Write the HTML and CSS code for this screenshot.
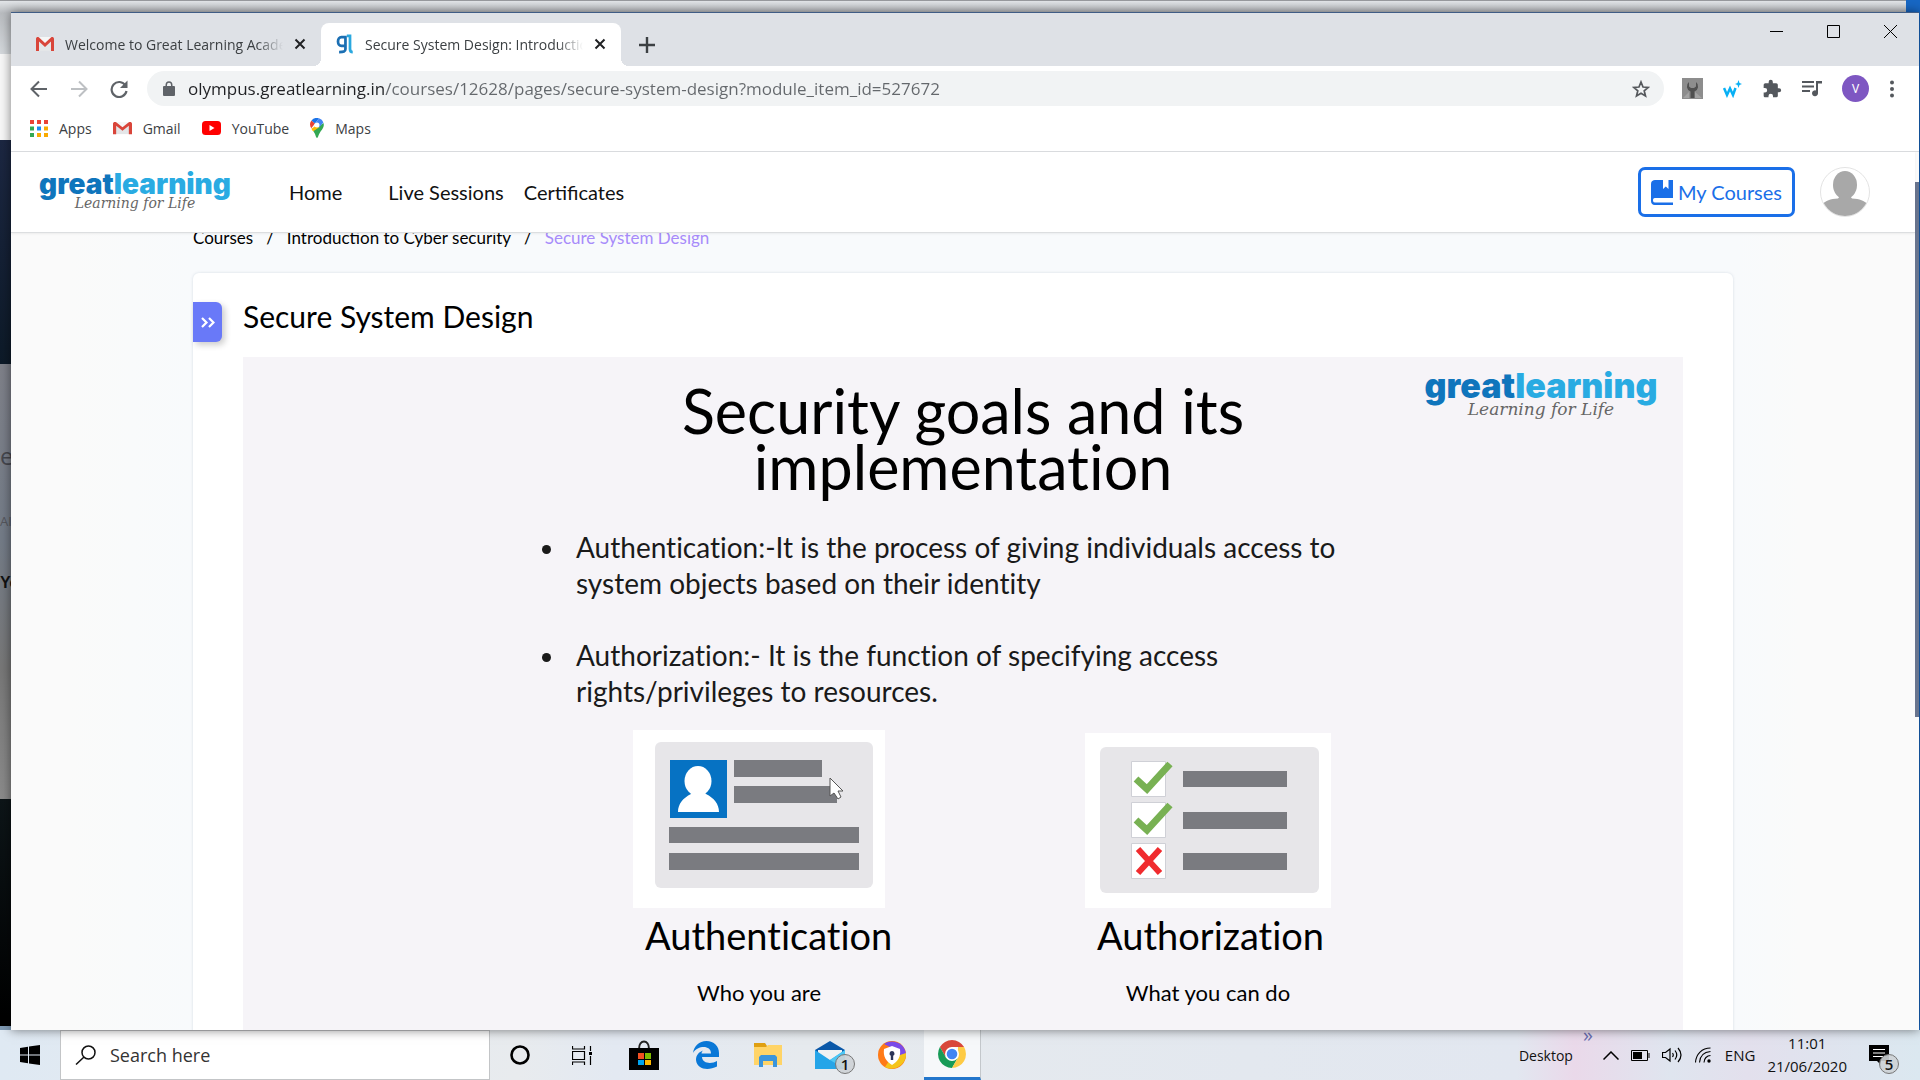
FILE: index.html
```html
<!DOCTYPE html>
<html lang="en">
<head>
<meta charset="utf-8">
<title>Secure System Design</title>
<link rel="stylesheet" href="styles.css">
</head>
<body>
<svg class="defs" aria-hidden="true">
  <symbol id="gmail" viewBox="0 0 18 16"><path fill="#e4e6e8" d="M2 2h14v13H2z"/><path fill="#f6f6f6" d="M3 1h12L9 8z"/><path fill="#d9453a" d="M0 15V3c0-2 2-2.500 3-1.500L9 7l6-5.500c1-1 3-.5 3 1.500v12h-3V5.500L9 11 3 5.500V15z"/></symbol>
  <symbol id="close" viewBox="0 0 12 12"><path d="M1.500 1.500l9 9M10.500 1.500l-9 9" stroke="#202124" stroke-width="2"/></symbol>
</svg>
<div class="desktop">
  <div class="backdrop" aria-hidden="true">
    <div class="back-tabs"></div>
    <div class="back-bar"></div>
    <div class="back-hero"></div>
    <div class="back-body"><span class="back-e">e</span><span class="back-ai">AI</span><span class="back-yo">Yo</span></div>
    <div class="back-foot"></div>
  </div>
  <div class="window">
    <div class="tabstrip">
      <div class="tab">
        <svg class="fav" viewBox="0 0 18 16"><use href="#gmail"/></svg>
        <span class="tab-title">Welcome to Great Learning Academy</span>
        <button class="bare" aria-label="Close tab"><svg width="12" height="12"><use href="#close"/></svg></button>
      </div>
      <div class="tab active">
        <svg class="fav" viewBox="0 0 18 22"><g fill="none" stroke-width="3"><path stroke="#1b6fb3" d="M9.500 3.500H5a3.500 4.500 0 0 0 0 9.500h4.500M9.500 2v14.500c0 3-2 3.500-7 3.500"/><path stroke="#2aa8df" d="M11 2h3.500v14.500c0 2 1 3.500 3 3.500"/></g></svg>
        <span class="tab-title">Secure System Design: Introduction</span>
        <button class="bare" aria-label="Close tab"><svg width="12" height="12"><use href="#close"/></svg></button>
      </div>
      <button class="bare newtab" aria-label="New tab"><svg width="16" height="16" viewBox="0 0 16 16"><path d="M8 0v16M0 8h16" stroke="#3c4043" stroke-width="2.400"/></svg></button>
      <div class="controls">
        <button class="bare" aria-label="Minimize"><svg width="13" height="13"><path d="M0 6.500h13" stroke="#000"/></svg></button>
        <button class="bare" aria-label="Maximize"><svg width="13" height="13"><path d="M.5.5h12v12H.5z" fill="none" stroke="#000"/></svg></button>
        <button class="bare" aria-label="Close"><svg width="13" height="13"><path d="M0 0l13 13M13 0L0 13" stroke="#000"/></svg></button>
      </div>
    </div>
    <div class="toolbar">
      <button class="bare" aria-label="Back"><svg width="18" height="18" viewBox="0 0 18 18"><path d="M17 9H2M9 1.500L1.500 9 9 16.500" fill="none" stroke="#5f6368" stroke-width="2"/></svg></button>
      <button class="bare" aria-label="Forward"><svg width="18" height="18" viewBox="0 0 18 18"><path d="M1 9h15M9 1.500L16.500 9 9 16.500" fill="none" stroke="#bdc0c3" stroke-width="2"/></svg></button>
      <button class="bare" aria-label="Reload"><svg width="18" height="18" viewBox="0 0 18 18"><path d="M15.500 5.500A7.500 7.500 0 1 0 16.500 11" fill="none" stroke="#5f6368" stroke-width="2.200"/><path d="M17.500.5v7.500H10z" fill="#5f6368"/></svg></button>
      <div class="omnibox">
        <svg width="12" height="15" viewBox="0 0 12 15"><path fill="#5f6368" d="M1 5h1.500V4a3.500 3.800 0 0 1 7 0v1H11a1 1 0 0 1 1 1v8a1 1 0 0 1-1 1H1a1 1 0 0 1-1-1V6a1 1 0 0 1 1-1zm3 0h4V4a2 2.300 0 0 0-4 0z"/></svg>
        <input class="url" aria-label="Address" value="olympus.greatlearning.in/courses/12628/pages/secure-system-design?module_item_id=527672">
        <button class="bare" aria-label="Bookmark"><svg width="18" height="18" viewBox="0 0 18 18"><path d="M9 2l2 5 5.200.4-4 3.400 1.300 5.200L9 13.200 4.500 16l1.300-5.200-4-3.400L7 7z" fill="none" stroke="#55585c" stroke-width="1.700"/></svg></button>
      </div>
      <div class="extensions">
        <button class="bare" aria-label="Wrench extension"><svg width="21" height="21" viewBox="0 0 21 21"><path fill="#8d8d8d" d="M0 0h21v21H0z"/><path fill="#a3a3a3" d="M1 20l6-6v6zM20 20l-7-6v6z"/><path fill="#505050" d="M8.500 20v-6.500A5.500 5.500 0 0 1 7 4v4.500l2 1.500h3l2-1.500V4a5.500 5.500 0 0 1-1.500 9.500V20z"/></svg></button>
        <button class="bare" aria-label="Writing extension"><svg width="19" height="18" viewBox="0 0 19 18"><path d="M1 8l3 7 3-6.500L10 15l2.500-7" fill="none" stroke="#08b0f5" stroke-width="2.500"/><path fill="#08b0f5" d="M15.500 0l1 3 2.500 1-2.500 1-1 3-1-3L12 4l2.500-1z"/></svg></button>
        <button class="bare" aria-label="Extensions"><svg width="20" height="20" viewBox="0 0 24 24"><path fill="#54585d" d="M20.500 11H19V7a2 2 0 0 0-2-2h-4V3.500a2.500 2.500 0 0 0-5 0V5H4a2 2 0 0 0-2 2v3.800h1.500a2.700 2.700 0 0 1 0 5.400H2V20c0 1.100.9 2 2 2h3.800v-1.500a2.700 2.700 0 0 1 5.400 0V22H17a2 2 0 0 0 2-2v-4h1.500a2.500 2.500 0 0 0 0-5z"/></svg></button>
        <button class="bare" aria-label="Media"><svg width="20" height="17" viewBox="0 0 20 17"><path d="M0 2h12M0 6.500h12M0 11h8" stroke="#54585d" stroke-width="2"/><path fill="#54585d" d="M14 1h6v2.500h-4V13a3 3 0 1 1-2-2.500z"/></svg></button>
        <button class="bare profile">V</button>
        <button class="bare" aria-label="Menu"><svg width="6" height="18" viewBox="0 0 6 18"><g fill="#54585d"><circle cx="3" cy="2.500" r="2"/><circle cx="3" cy="9" r="2"/><circle cx="3" cy="15.500" r="2"/></g></svg></button>
      </div>
    </div>
    <nav class="bookmarks">
      <a href="#"><svg width="18" height="17" viewBox="0 0 18 17"><path fill="#ea4335" d="M0 0h4v4H0zM7 0h4v4H7zM14 0h4v4h-4z"/><path fill="#34a853" d="M0 6.500h4v4H0zM0 13h4v4H0z"/><path fill="#1a8cf0" d="M7 6.500h4v4H7z"/><path fill="#f9ab00" d="M14 6.500h4v4h-4zM7 13h4v4H7zM14 13h4v4h-4z"/></svg>Apps</a>
      <a href="#"><svg width="19" height="14" viewBox="0 0 18 16" preserveAspectRatio="none"><use href="#gmail"/></svg>Gmail</a>
      <a href="#"><svg width="19" height="14" viewBox="0 0 19 14"><rect width="19" height="14" rx="3.500" fill="#f00"/><path fill="#fff" d="M7.500 4l5 3-5 3z"/></svg>YouTube</a>
      <a href="#"><svg width="14" height="20" viewBox="0 0 14 20"><path fill="#34a853" d="M13.500 5c1.500 5-3 7-5 12.500C8 19 7.500 20 7 20s-1-1-1.500-2.500c-.5-2-1.500-3.300-2.500-4.700z"/><path fill="#fbbc04" d="M1.500 10.500L9 9l-6 4z"/><path fill="#fbbc04" d="M4.500 8.500l5 .5-6.300 4.200L1.500 11z"/><path fill="#ea4335" d="M1.500 2.500L5 5.500 1.300 10.300C-.5 7.500-.3 4.700 1.500 2.500z"/><path fill="#1a73e8" d="M1.500 2.500A7 7 0 0 1 9 .3L5 5.500z"/><path fill="#4285f4" d="M9 .3a7 7 0 0 1 4.400 4.200L9 9.500 5 5.500z"/><circle cx="7" cy="7" r="2.500" fill="#fff"/></svg>Maps</a>
    </nav>
    <div class="page">
      <header class="site">
        <a class="brand" href="#"><span class="word"><b>great</b>learning</span><i>Learning for Life</i></a>
        <nav class="links"><a href="#">Home</a><a href="#">Live Sessions</a><a href="#">Certificates</a></nav>
        <button class="my-courses"><svg width="22" height="25" viewBox="0 0 22 25"><path fill="#1a6fe8" d="M4 0h8v9l2.800-2.500L17.500 9V0H22v18H4c-2 0-2 1.500-2 2.500s1 2.500 2 2.500h18v2H4c-3 0-4-2-4-4V4c0-3 2-4 4-4z"/><path fill="#1a6fe8" d="M2 22.500h20V25H4z"/></svg>My Courses</button>
        <svg class="avatar" viewBox="0 0 50 50"><defs><clipPath id="round"><circle cx="25" cy="25" r="24"/></clipPath></defs><circle cx="25" cy="25" r="24.500" fill="#fff" stroke="#e3e3e3"/><g fill="#a8a8a8" clip-path="url(#round)"><ellipse cx="25" cy="18" rx="12" ry="14"/><path d="M20 29h10l2 2.500c8 .5 12 2 16 6V50H2V37.500c4-4 8-5.500 16-6z"/></g></svg>
      </header>
      <main class="content">
        <nav class="crumbs"><a href="#">Courses</a><span>/</span><a href="#">Introduction to Cyber security</a><span>/</span><a class="here" href="#">Secure System Design</a></nav>
        <article class="card">
          <div class="card-head">
            <button class="expand" aria-label="Show modules"><svg width="14" height="11" viewBox="0 0 14 11"><path d="M1 1l4.500 4.500L1 10M8 1l4.500 4.500L8 10" fill="none" stroke="#fff" stroke-width="2.200"/></svg></button>
            <h1>Secure System Design</h1>
          </div>
          <section class="slide">
            <div class="slide-head">
              <h2>Security goals and its<br>implementation</h2>
              <div class="brand large"><span class="word"><b>great</b>learning</span><i>Learning for Life</i></div>
            </div>
            <ul class="points">
              <li>Authentication:-It is the process of giving individuals access to<br>system objects based on their identity</li>
              <li>Authorization:- It is the function of specifying access<br>rights/privileges to resources.</li>
            </ul>
            <div class="figures">
              <figure>
                <svg width="252" height="178" viewBox="0 0 252 178"><path fill="#fff" d="M0 0h252v178H0z"/><rect x="22" y="12" width="218" height="146" rx="6" fill="#e7e6e9"/><path fill="#0672c3" d="M37 30h57v58H37z"/><ellipse cx="65" cy="51" rx="13.500" ry="15" fill="#fff"/><path fill="#fff" d="M60 61h10l3 3c8 4 13 10 13 18H45c0-8 5-14 13-18z"/><path fill="#7a7b80" d="M101 30h88v17h-88zM101 56h103v17H101zM36 97h190v16H36zM36 123h190v17H36z"/><path fill="#fff" stroke="#555" d="M197 48v18l4-3 4 6 3-2-3-6h5z"/></svg>
                <figcaption><strong>Authentication</strong><span>Who you are</span></figcaption>
              </figure>
              <figure>
                <svg width="246" height="175" viewBox="0 0 246 175"><path fill="#fff" d="M0 0h246v175H0z"/><rect x="15" y="14" width="219" height="146" rx="6" fill="#e7e6e9"/><g fill="#fff" stroke="#cfd0d6"><path d="M46.500 28.500h34v35h-34zM46.500 69.500h34v35h-34zM46.500 110.500h34v35h-34z"/></g><path fill="none" stroke="#78b153" stroke-width="7" d="M51 46l11 10 23-25M51 87l11 10 23-25"/><path stroke="#f02b2e" stroke-width="6" d="M53 116l22 24M75 116l-22 24"/><path fill="#7a7b80" d="M98 38h104v16H98zM98 79h104v17H98zM98 120h104v17H98z"/></svg>
                <figcaption><strong>Authorization</strong><span>What you can do</span></figcaption>
              </figure>
            </div>
          </section>
        </article>
      </main>
      <div class="scrollbar"></div>
    </div>
  </div>
</div>
<footer class="taskbar">
  <button class="bare start" aria-label="Start"><svg width="20" height="20" viewBox="0 0 20 20"><path d="M0 3l8-1.300v7.800H0zM9 1.500L20 0v9.500H9zM0 10.500h8v7.800L0 17zM9 10.500h11V20L9 18.500z"/></svg></button>
  <label class="search"><svg width="21" height="20" viewBox="0 0 21 20"><g fill="none" stroke="#111" stroke-width="1.500"><circle cx="13.500" cy="7.500" r="6.500"/><path d="M9 12L1 19.500"/></g></svg><input placeholder="Search here" aria-label="Search here"></label>
  <div class="apps">
    <button class="bare" aria-label="Cortana"><svg width="20" height="20" viewBox="0 0 20 20"><circle cx="10" cy="10" r="8.500" fill="none" stroke="#000" stroke-width="2.600"/></svg></button>
    <button class="bare" aria-label="Task view"><svg width="21" height="19" viewBox="0 0 21 19"><path d="M.5 0v3h12V0M.5 19v-3h12v3M.5 5.500h12v8H.5zM18.500 0v5M18.500 10v9" fill="none" stroke="#000" stroke-width="1.200"/><path d="M17 6h3v3h-3z"/></svg></button>
    <button class="bare" aria-label="Store"><svg width="30" height="30" viewBox="0 0 30 30"><path d="M10 9c0-10 10-10 10 0" fill="none" stroke="#222" stroke-width="2"/><path d="M0 8h30v22H0z"/><path fill="#f25022" d="M9 13h6v6H9z"/><path fill="#7fba00" d="M16 13h6v6h-6z"/><path fill="#00a4ef" d="M9 20h6v5H9z"/><path fill="#ffb900" d="M16 20h6v5h-6z"/></svg></button>
    <button class="bare" aria-label="Edge"><svg width="26" height="28" viewBox="0 0 26 28"><path fill="#0a78d7" d="M0 12C1 5 6 0 13.500 0 21 0 26 5 26 12v4H9c.5 7 10 7 15 4v5.500C15 30 4 28.500 3 19c0-5 3-8 7-9.500-1 1-1.300 2-1.500 3H18C18 4 5 4 0 12z"/></svg></button>
    <button class="bare" aria-label="Explorer"><svg width="28" height="24" viewBox="0 0 28 24"><path fill="#e0a012" d="M0 0h11l2 3v5H0z"/><path fill="#ffd467" d="M0 4h12l2-2h14v20H0z"/><path fill="#3a95dc" d="M5 24V14l2-2h14l2 2v10h-4v-6H9v6z"/></svg></button>
    <button class="bare has-badge" aria-label="Mail"><svg width="30" height="28" viewBox="0 0 30 28"><path fill="#0a58a8" d="M0 9l15-9 15 9v8H0z"/><path fill="#f2f2f2" d="M3 9h24v8L15 20 3 15z"/><path fill="#25a5e8" d="M0 9l15 10L30 9v19H0z"/><path fill="#4dc7f5" d="M30 9L15 19l15 9z"/></svg><span class="badge">1</span></button>
    <button class="bare" aria-label="Secure browser"><svg width="28" height="28" viewBox="0 0 28 28"><circle cx="14" cy="14" r="14" fill="#ff7a17"/><path fill="#7b4be8" d="M6 3C14-3 28 2 28 14l-6 1L14 7z"/><path fill="#f5c51a" d="M28 12c1 12-12 19-21 14l4-6 11-6z"/><path fill="#fff" d="M14 5l8 3c1 8-2 12-8 16-6-4-9-8-8-16z"/><path fill="#2b3557" d="M14 10a2.500 2.500 0 0 1 1.200 4.700V19h-2.400v-4.300A2.500 2.500 0 0 1 14 10z"/></svg></button>
    <button class="bare running" aria-label="Chrome"><svg width="28" height="28" viewBox="0 0 28 28"><path fill="#d9483b" d="M14 7h12.100A14 14 0 0 0 1.900 7l6 10.500z"/><path fill="#179b57" d="M1.900 7A14 14 0 0 0 14 28l6-10.500-12 0z"/><path fill="#fecb45" d="M26.100 7A14 14 0 0 1 14 28l6-10.500L20 7z"/><circle cx="14" cy="14" r="7" fill="#fff"/><circle cx="14" cy="14" r="5.300" fill="#4285f4"/></svg></button>
  </div>
  <div class="tray">
    <span>Desktop</span><span class="more">»</span>
    <div class="tray-icons">
      <button class="bare" aria-label="Hidden icons"><svg width="16" height="9" viewBox="0 0 16 9"><path d="M.5 8.500L8 1l7.500 7.500" fill="none" stroke="#000" stroke-width="1.500"/></svg></button>
      <button class="bare" aria-label="Battery"><svg width="19" height="11" viewBox="0 0 19 11"><path d="M.5.5h16v10H.5zM18 3v5" fill="none" stroke="#000"/><path d="M2 2h9v7H2z"/></svg></button>
      <button class="bare" aria-label="Volume"><svg width="21" height="18" viewBox="0 0 21 18"><path d="M.5 6.500h3L8 3v12l-4.500-3.500h-3zM10.500 7q1.500 2 0 4M13 4.500q3.500 4.500 0 9M16 2q6 7 0 14" fill="none" stroke="#000" stroke-width="1.200"/></svg></button>
      <button class="bare" aria-label="Network"><svg width="16" height="16" viewBox="0 0 16 16"><path d="M.5 15.500C1 7 7 1 15.500 1M4.500 15.500C5 9 9 5 15.500 4.500M9 15.500c0-4 3-7 6.500-7" fill="none" stroke="#000" stroke-width="1.100"/><circle cx="14" cy="14" r="1.700"/></svg></button>
    </div>
    <span class="lang">ENG</span>
    <div class="clock"><span>11:01</span><span>21/06/2020</span></div>
    <button class="bare has-badge" aria-label="Notifications"><svg width="20" height="20" viewBox="0 0 20 20"><path d="M0 0h20v16h-8v4l-4-4H0z"/><path d="M4 4.500h12M4 8h12M4 11.500h12" stroke="#fff"/></svg><span class="badge">5</span></button>
  </div>
</footer>
</body>
</html>
```
FILE: styles.css
```css
* { box-sizing: border-box; }
body { margin: 0; height: 100vh; display: flex; flex-direction: column; overflow: hidden; font-family: "Open Sans", "Noto Sans", sans-serif; color: #111; }
h1, h2, ul, figure { margin: 0; padding: 0; font-weight: 400; }
a { color: inherit; text-decoration: none; }
svg { display: block; flex: none; }
.defs { width: 0; height: 0; position: absolute; }
.bare { display: flex; align-items: center; justify-content: center; flex: none; border: 0; padding: 0; background: none; font: inherit; color: inherit; }

.desktop { position: relative; flex: 1; min-height: 0; display: flex; background: #1767c4; }
.backdrop { position: absolute; inset: 0 14px 0 0; display: flex; flex-direction: column; background: #f7f7f7; }
.back-tabs { height: 54px; flex: none; border-top: 1px solid #97999d; background: linear-gradient(#e2e5e8, #b9bcc0 12px, #d4d8dc); border-bottom-right-radius: 8px; }
.back-bar { height: 86px; flex: none; background: #f7f7f7; }
.back-hero { flex: 225; background: linear-gradient(#1c2742, #0d1a28); }
.back-body { flex: 437; display: flex; flex-direction: column; background: linear-gradient(#7e8089, #737b87 40%, #777 70%, #8b8b8b); }
.back-foot { flex: 228; background: linear-gradient(#0d1518, #000); border-bottom: 4px solid #7f9ab3; }
.back-e { padding-top: 72px; font-size: 24px; line-height: 40px; color: #45464d; }
.back-ai { padding-top: 26px; font-size: 13px; line-height: 38px; color: #55575d; }
.back-yo { padding-top: 24px; font: 700 16px/38px "Liberation Sans", sans-serif; color: #111; }

.window { position: relative; flex: 1; min-width: 0; display: flex; flex-direction: column; margin: 12px 1px 0 11px; border-top: 1px solid #3f5c85; background: #fff; box-shadow: 0 0 10px rgba(0, 0, 0, .5); }
.tabstrip { display: flex; align-items: flex-end; height: 53px; padding-left: 10px; background: #dee1e6; }
.tab { position: relative; display: flex; align-items: center; gap: 11px; width: 300px; height: 43px; padding: 0 15px 1px; font-size: 14px; color: #3c4043; }
.tab.active { background: #fff; border-radius: 8px 8px 0 0; }
.tab.active::before, .tab.active::after { content: ""; position: absolute; bottom: 0; width: 8px; height: 8px; }
.tab.active::before { left: -8px; background: radial-gradient(circle at 0 0, transparent 8px, #fff 8px); }
.tab.active::after { right: -8px; background: radial-gradient(circle at 100% 0, transparent 8px, #fff 8px); }
.fav { width: 18px; height: 20px; }
.tab-title { flex: 1; overflow: hidden; white-space: nowrap; -webkit-mask-image: linear-gradient(90deg, #000 88%, transparent); mask-image: linear-gradient(90deg, #000 88%, transparent); }
.newtab { height: 43px; margin-left: 18px; }
.controls { display: flex; align-self: flex-start; gap: 44px; margin-left: auto; padding: 12px 22px 0 0; }

.toolbar { display: flex; align-items: center; gap: 22px; height: 45px; padding: 0 24px 0 19px; }
.omnibox { flex: 1; display: flex; align-items: center; gap: 13px; height: 35px; margin-left: -3px; padding: 0 14px 0 16px; border-radius: 18px; background: #f1f3f4; }
.url { flex: 1; min-width: 0; border: 0; padding: 0; outline: 0; font: 17px "Open Sans", "Noto Sans", sans-serif; color: transparent; background: linear-gradient(90deg, #202124 196px, #64686c 196px); -webkit-background-clip: text; background-clip: text; }
.extensions { display: flex; align-items: center; gap: 20px; margin-left: -4px; }
.profile { width: 27px; height: 27px; border-radius: 50%; background: #7e57c2; color: #fff; font: 12px Roboto, sans-serif; }
.bookmarks { display: flex; align-items: center; gap: 21px; height: 41px; padding: 0 19px 6px; border-bottom: 1px solid #d9dbde; font-size: 14px; color: #3c4043; }
.bookmarks a { display: flex; align-items: center; gap: 11px; }

.page { position: relative; flex: 1; min-height: 0; overflow: hidden; padding-right: 4px; font-family: Lato, sans-serif; background: linear-gradient(90deg, #fafafa 60px, #f8fafc 180px, #f8fafc calc(100% - 180px), #fafafa calc(100% - 120px)); }
.site { position: relative; z-index: 1; display: flex; align-items: center; height: 81px; padding: 0 45px 0 30px; background: #fff; border-bottom: 1px solid #dcdee0; box-shadow: 0 1px 2px rgba(0, 0, 0, .06); }
.brand { display: flex; flex-direction: column; align-items: center; width: 188px; padding-bottom: 5px; }
.brand .word { font: 900 28px/26px Inter, sans-serif; color: #29abe2; }
.brand b { font-weight: 900; color: #0f75bc; }
.brand i { font: italic 14px/12px "DejaVu Serif", serif; color: #666; }
.links { display: flex; margin-left: 60px; font-size: 20px; }
.links a:nth-child(2) { margin: 0 20px 0 46px; }
.my-courses { display: flex; align-items: center; gap: 5px; height: 50px; margin-left: auto; padding: 0 10px; border: 3px solid #1a6fe8; border-radius: 7px; background: #fff; font: 20px Lato, sans-serif; color: #1a6fe8; }
.avatar { width: 50px; height: 50px; margin-left: 25px; }
.content { max-width: 1540px; margin: -8px auto 0; }
.crumbs { display: flex; gap: 13px; font-size: 17px; line-height: 26px; color: #000; }
.here { color: #a78bfa; }
.card { margin-top: 22px; padding-bottom: 50px; border-radius: 6px; background: #fff; box-shadow: 0 0 3px rgba(80, 110, 140, .2); }
.card-head { display: flex; gap: 21px; height: 84px; padding-top: 22px; }
.expand { display: flex; align-items: center; justify-content: center; width: 29px; height: 40px; margin-top: 7px; padding: 0; border: 0; border-radius: 0 6px 6px 0; background: #6979f8; box-shadow: 3px 3px 6px rgba(0, 0, 0, .2); }
.card-head h1 { font-size: 30px; line-height: 42px; color: #000; }

.slide { aspect-ratio: 16 / 9; margin: 0 50px; padding: 14px 26px; background: #f6f4f8; color: #000; font-variant-ligatures: none; }
.slide-head { display: grid; grid-template-columns: 1fr auto 1fr; }
.slide-head h2 { grid-column: 2; padding-top: 12px; font-size: 61px; line-height: 56px; text-align: center; }
.brand.large { justify-self: end; width: 232px; padding: 0; }
.large .word { font-size: 34px; line-height: 30px; }
.large i { font-size: 17px; line-height: 16px; }
.points { display: flex; flex-direction: column; gap: 36px; margin: 34px 0 0 298px; font-size: 28px; line-height: 36px; color: #1a1a1a; }
.points li { padding-left: 9px; }
.figures { display: flex; align-items: flex-end; gap: 200px; margin: 21px 0 0 364px; }
.figures figcaption { display: flex; flex-direction: column; gap: 17px; }
.figures strong { padding-left: 12px; font-size: 38px; font-weight: 400; line-height: 54px; white-space: nowrap; }
.figures figure { width: 252px; }
.figures figure + figure { width: 246px; }
.figures span { font-size: 22px; line-height: 28px; text-align: center; }
.scrollbar { position: absolute; top: 0; right: 0; bottom: 0; width: 4px; background: linear-gradient(#fafafa 30px, #68748e 30px, #68748e 565px, #fafafa 565px); }

.taskbar { display: flex; align-items: center; height: 50px; flex: none; background: linear-gradient(90deg, #dfe9f3, #e8ebee 27%, #e3e9f2 32%, #e6eaee 42%, #e3e8ef 65%, #e2e7f0 79%, #ead9ea 82%, #dfe5ef 87%, #e3e0ed 91%, #dbe8f0); }
.start { width: 60px; height: 50px; }
.search { display: flex; align-items: center; gap: 14px; width: 430px; height: 50px; padding: 0 14px; border: 1px solid #c3c5c7; background: #fff; }
.search input { flex: 1; min-width: 0; padding: 0; border: 0; outline: 0; background: none; font: 18px "Open Sans", sans-serif; }
.search input::placeholder { color: #333; opacity: 1; }
.apps { display: flex; margin-left: -1px; }
.apps .bare { width: 62px; height: 50px; }
.apps .running { width: 57px; margin-left: 1px; border-bottom: 3px solid #2377cc; border-right: 1px solid #c3c7cb; background: #f6f8fa; }
.has-badge { position: relative; }
.badge { position: absolute; left: 50%; top: 24px; margin-left: 5px; width: 20px; height: 20px; border: 1px solid #777; border-radius: 50%; background: rgba(205, 210, 213, .9); font-size: 15px; font-weight: 600; line-height: 18px; text-align: center; }
.tray { display: flex; align-items: center; height: 50px; margin-left: auto; padding-right: 31px; font-size: 15px; }
.tray > span:first-child { font-size: 14px; }
.more { align-self: flex-start; margin: 0 10px; font-size: 20px; line-height: 10px; color: #6a6fb0; }
.tray-icons { display: flex; align-items: center; gap: 12px; }
.lang { margin: 0 12px 0 14px; }
.clock { display: flex; flex-direction: column; align-items: center; line-height: 23px; }
.tray .has-badge { margin-left: 22px; }
.tray .badge { top: 9px; margin-left: 0; }
```
